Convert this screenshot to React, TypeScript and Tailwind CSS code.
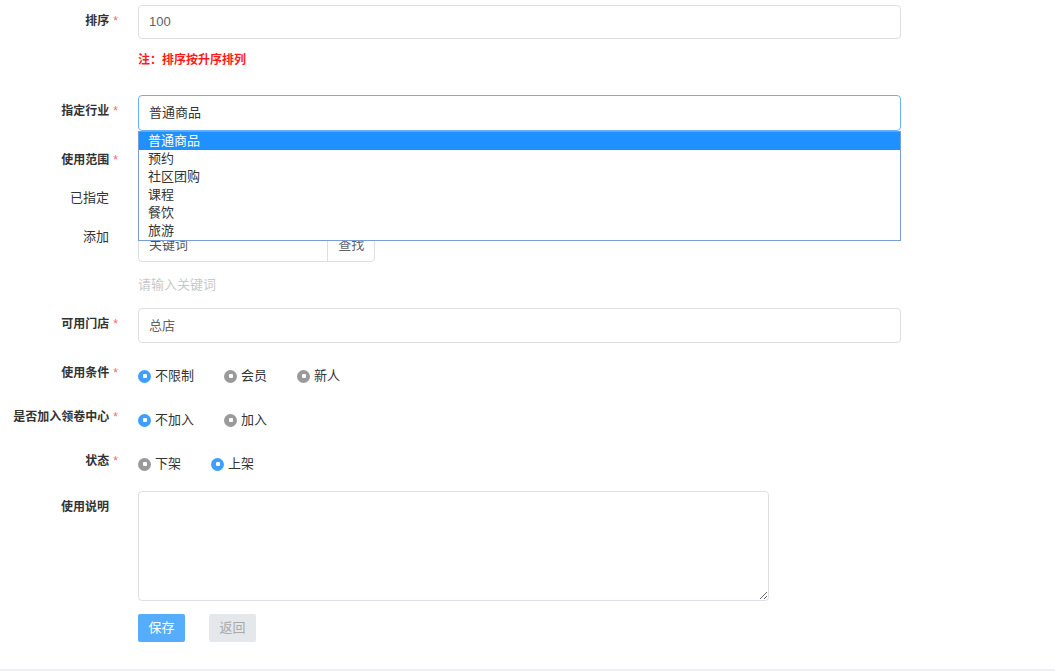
import React from "react"

const font = { fontFamily: '"Liberation Sans", "Noto Sans CJK SC", sans-serif' }

function Label({ text, required = true, className = "" }: { text: string; required?: boolean; className?: string }) {
  return (
    <div className={"w-[118px] shrink-0 text-right text-[12px] leading-[17px] font-bold text-[#333] " + className}>
      {text}
      {required && <span className="ml-[4px] font-normal text-[#f56c6c]">*</span>}
    </div>
  )
}

function Radio({ label, checked }: { label: string; checked?: boolean }) {
  return (
    <label className="mr-[30px] flex items-center text-[13px] leading-[18px] text-[#333]">
      <span
        className={
          "flex h-[13px] w-[13px] items-center justify-center rounded-full " +
          (checked ? "bg-[#409eff]" : "bg-[#9a9a9a]")
        }
      >
        <span className="h-[4px] w-[4px] rounded-[1px] bg-white" />
      </span>
      <span className="ml-[4px]">{label}</span>
    </label>
  )
}

const industries = ["普通商品", "预约", "社区团购", "课程", "餐饮", "旅游"]

export default function App() {
  return (
    <div className="min-h-screen bg-[#f0f0f4]" style={font}>
      <div className="h-[669px] bg-white pt-[5px]">
        {/* 排序 */}
        <div className="flex items-start">
          <Label text="排序" className="pt-[8px]" />
          <div className="ml-[20px] w-[763px]">
            <div className="flex h-[34px] items-center rounded-[4px] border border-[#dcdfe6] px-[10px] text-[13px] text-[#606266]">
              100
            </div>
            <div className="mt-[13px] text-[12px] font-bold leading-[17px] text-[#ff1a1a]">注：排序按升序排列</div>
          </div>
        </div>

        {/* 指定行业 */}
        <div className="relative z-10 mt-[26px] flex items-start">
          <Label text="指定行业" className="pt-[8px]" />
          <div className="relative ml-[20px] w-[763px]">
            <div className="flex h-[36px] items-center rounded-[4px] border border-[#66b1ff] px-[10px] text-[13px] text-[#333]">
              普通商品
            </div>
            <ul className="absolute left-0 top-full w-full border border-[#7a9cd8] bg-white">
              {industries.map((item, i) => (
                <li
                  key={item}
                  className={
                    "h-[18px] pl-[9px] text-[13px] leading-[18px] " +
                    (i === 0 ? "bg-[#1e90ff] text-white" : "text-[#333]")
                  }
                >
                  {item}
                </li>
              ))}
            </ul>
          </div>
        </div>

        {/* 使用范围 */}
        <div className="mt-[13px] flex h-[30px] items-start">
          <Label text="使用范围" className="pt-[8px]" />
        </div>

        <div className="mt-[9px] flex h-[30px] items-start">
          <div className="w-[118px] shrink-0 pr-[9px] pt-[6px] text-right text-[13px] leading-[18px] text-[#333]">已指定</div>
        </div>

        <div className="mt-[15px] flex items-start">
          <div className="w-[118px] shrink-0 pr-[9px] text-right text-[13px] leading-[18px] text-[#333]">添加</div>
          <div className="ml-[20px]">
            <div className="flex h-[34px] w-[237px] rounded-[4px] border border-[#dcdfe6]">
              <div className="flex w-[190px] items-center px-[10px] text-[13px] text-[#555]">关键词</div>
              <button className="flex w-[47px] items-center justify-center border-l border-[#dcdfe6] text-[13px] text-[#606266]">
                查找
              </button>
            </div>
            <div className="mt-[14px] text-[13px] leading-[18px] text-[#c8c9cc]">请输入关键词</div>
          </div>
        </div>

        {/* 可用门店 */}
        <div className="mt-[14px] flex items-start">
          <Label text="可用门店" className="pt-[8px]" />
          <div className="ml-[20px] flex h-[35px] w-[763px] items-center rounded-[4px] border border-[#dcdfe6] px-[10px] text-[13px] text-[#606266]">
            总店
          </div>
        </div>

        {/* 使用条件 */}
        <div className="mt-[20px] flex items-start">
          <Label text="使用条件" className="pt-[2px]" />
          <div className="ml-[20px] flex pt-[4px]">
            <Radio label="不限制" checked />
            <Radio label="会员" />
            <Radio label="新人" />
          </div>
        </div>

        <div className="mt-[22px] flex items-start">
          <Label text="是否加入领卷中心" className="pt-[2px]" />
          <div className="ml-[20px] flex pt-[4px]">
            <Radio label="不加入" checked />
            <Radio label="加入" />
          </div>
        </div>

        <div className="mt-[22px] flex items-start">
          <Label text="状态" className="pt-[2px]" />
          <div className="ml-[20px] flex pt-[4px]">
            <Radio label="下架" />
            <Radio label="上架" checked />
          </div>
        </div>

        {/* 使用说明 */}
        <div className="mt-[18px] flex items-start">
          <Label text="使用说明" required={false} className="pr-[9px] pt-[8px]" />
          <div className="ml-[20px]">
            <textarea className="block h-[110px] w-[631px] resize rounded-[4px] border border-[#dcdfe6] outline-none" />
            <div className="mt-[13px] flex gap-[24px]">
              <button className="h-[28px] w-[47px] rounded-[2px] bg-[#55adfc] text-[13px] text-white">保存</button>
              <button className="h-[28px] w-[47px] rounded-[2px] bg-[#e4e8eb] text-[13px] text-[#a8a8a8]">返回</button>
            </div>
          </div>
        </div>
      </div>
    </div>
  )
}
